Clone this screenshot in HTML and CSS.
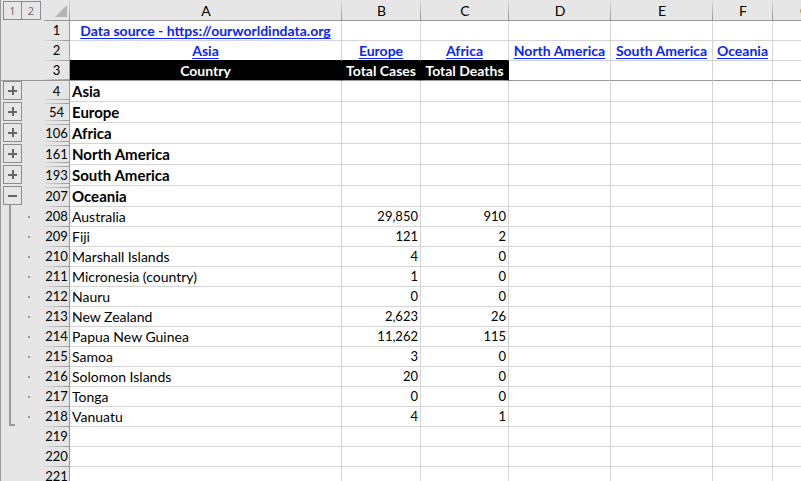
FILE: index.html
```html
<!DOCTYPE html>
<html lang="en">
<head>
    <meta charset="UTF-8">
    <meta name="viewport" content="width=device-width, initial-scale=1.0">
    <title>Total Cases and Deaths by Country</title>
    <link rel="stylesheet" href="styles.css">
</head>
<body>
    <div class="sheet">
        <table class="grid">
            <colgroup>
                <col class="col-outline">
                <col class="col-dots">
                <col class="col-rownum">
                <col class="col-a">
                <col class="col-b">
                <col class="col-c">
                <col class="col-d">
                <col class="col-e">
                <col class="col-f">
                <col class="col-g">
            </colgroup>
            <thead>
                <tr class="letters">
                    <td class="levels" colspan="2"><div class="level-buttons"><button type="button">1</button><button type="button">2</button></div></td>
                    <td class="corner"><svg width="12" height="12" viewBox="0 0 12 12"><path d="M12 0V12H0Z" fill="#b4b4b4"/></svg></td>
                    <th>A</th><th>B</th><th>C</th><th>D</th><th>E</th><th>F</th><th>G</th>
                </tr>
                <tr>
                    <td class="outline"></td><td class="outline"></td><th class="num">1</th>
                    <td class="link"><a href="https://ourworldindata.org">Data source - https://ourworldindata.org</a></td>
                    <td></td><td></td><td></td><td></td><td></td><td></td>
                </tr>
                <tr class="links">
                    <td class="outline"></td><td class="outline"></td><th class="num">2</th>
                    <td class="link"><a href="#asia">Asia</a></td>
                    <td class="link"><a href="#europe">Europe</a></td>
                    <td class="link"><a href="#africa">Africa</a></td>
                    <td class="link"><a href="#north-america">North America</a></td>
                    <td class="link"><a href="#south-america">South America</a></td>
                    <td class="link"><a href="#oceania">Oceania</a></td>
                    <td></td>
                </tr>
                <tr class="frozen">
                    <td class="outline"></td><td class="outline"></td><th class="num">3</th>
                    <th class="title">Country</th><th class="title">Total Cases</th><th class="title">Total Deaths</th>
                    <td></td><td></td><td></td><td></td>
                </tr>
            </thead>
            <tbody>
                <tr class="group first" id="asia">
                    <td class="outline"><button type="button" class="toggle" aria-label="Expand Asia"></button></td><td class="outline"></td><th class="num">4</th>
                    <td>Asia</td><td></td><td></td><td></td><td></td><td></td><td></td>
                </tr>
                <tr class="group" id="europe">
                    <td class="outline"><button type="button" class="toggle" aria-label="Expand Europe"></button></td><td class="outline"></td><th class="num">54</th>
                    <td>Europe</td><td></td><td></td><td></td><td></td><td></td><td></td>
                </tr>
                <tr class="group" id="africa">
                    <td class="outline"><button type="button" class="toggle" aria-label="Expand Africa"></button></td><td class="outline"></td><th class="num">106</th>
                    <td>Africa</td><td></td><td></td><td></td><td></td><td></td><td></td>
                </tr>
                <tr class="group" id="north-america">
                    <td class="outline"><button type="button" class="toggle" aria-label="Expand North America"></button></td><td class="outline"></td><th class="num">161</th>
                    <td>North America</td><td></td><td></td><td></td><td></td><td></td><td></td>
                </tr>
                <tr class="group" id="south-america">
                    <td class="outline"><button type="button" class="toggle" aria-label="Expand South America"></button></td><td class="outline"></td><th class="num">193</th>
                    <td>South America</td><td></td><td></td><td></td><td></td><td></td><td></td>
                </tr>
                <tr class="group open" id="oceania">
                    <td class="outline"><button type="button" class="toggle" aria-label="Collapse Oceania"></button><div class="line stub"></div></td><td class="outline"></td><th class="num">207</th>
                    <td>Oceania</td><td></td><td></td><td></td><td></td><td></td><td></td>
                </tr>
                <tr>
                    <td class="outline"><div class="line"></div></td><td class="outline dot"></td><th class="num">208</th>
                    <td>Australia</td><td class="value">29,850</td><td class="value">910</td><td></td><td></td><td></td><td></td>
                </tr>
                <tr>
                    <td class="outline"><div class="line"></div></td><td class="outline dot"></td><th class="num">209</th>
                    <td>Fiji</td><td class="value">121</td><td class="value">2</td><td></td><td></td><td></td><td></td>
                </tr>
                <tr>
                    <td class="outline"><div class="line"></div></td><td class="outline dot"></td><th class="num">210</th>
                    <td>Marshall Islands</td><td class="value">4</td><td class="value">0</td><td></td><td></td><td></td><td></td>
                </tr>
                <tr>
                    <td class="outline"><div class="line"></div></td><td class="outline dot"></td><th class="num">211</th>
                    <td>Micronesia (country)</td><td class="value">1</td><td class="value">0</td><td></td><td></td><td></td><td></td>
                </tr>
                <tr>
                    <td class="outline"><div class="line"></div></td><td class="outline dot"></td><th class="num">212</th>
                    <td>Nauru</td><td class="value">0</td><td class="value">0</td><td></td><td></td><td></td><td></td>
                </tr>
                <tr>
                    <td class="outline"><div class="line"></div></td><td class="outline dot"></td><th class="num">213</th>
                    <td>New Zealand</td><td class="value">2,623</td><td class="value">26</td><td></td><td></td><td></td><td></td>
                </tr>
                <tr>
                    <td class="outline"><div class="line"></div></td><td class="outline dot"></td><th class="num">214</th>
                    <td>Papua New Guinea</td><td class="value">11,262</td><td class="value">115</td><td></td><td></td><td></td><td></td>
                </tr>
                <tr>
                    <td class="outline"><div class="line"></div></td><td class="outline dot"></td><th class="num">215</th>
                    <td>Samoa</td><td class="value">3</td><td class="value">0</td><td></td><td></td><td></td><td></td>
                </tr>
                <tr>
                    <td class="outline"><div class="line"></div></td><td class="outline dot"></td><th class="num">216</th>
                    <td>Solomon Islands</td><td class="value">20</td><td class="value">0</td><td></td><td></td><td></td><td></td>
                </tr>
                <tr>
                    <td class="outline"><div class="line"></div></td><td class="outline dot"></td><th class="num">217</th>
                    <td>Tonga</td><td class="value">0</td><td class="value">0</td><td></td><td></td><td></td><td></td>
                </tr>
                <tr>
                    <td class="outline"><div class="line end"></div></td><td class="outline dot"></td><th class="num">218</th>
                    <td>Vanuatu</td><td class="value">4</td><td class="value">1</td><td></td><td></td><td></td><td></td>
                </tr>
                <tr>
                    <td class="outline"></td><td class="outline"></td><th class="num">219</th>
                    <td></td><td></td><td></td><td></td><td></td><td></td><td></td>
                </tr>
                <tr>
                    <td class="outline"></td><td class="outline"></td><th class="num">220</th>
                    <td></td><td></td><td></td><td></td><td></td><td></td><td></td>
                </tr>
                <tr>
                    <td class="outline"></td><td class="outline"></td><th class="num">221</th>
                    <td></td><td></td><td></td><td></td><td></td><td></td><td></td>
                </tr>
            </tbody>
        </table>
    </div>
</body>
</html>
```

FILE: styles.css
```css
* {
    box-sizing: border-box;
}
body {
    margin: 0;
    background: #fff;
    color: #000;
    font-family: Lato, "Liberation Sans", sans-serif;
    font-size: 14px;
}
.sheet {
    height: 100vh;
    overflow: hidden;
}
.grid {
    width: 837px;
    min-width: 100%;
    table-layout: fixed;
    border-collapse: separate;
    border-spacing: 0;
}
.col-outline, .col-dots { width: 22px; }
.col-rownum { width: 26px; }
.col-a { width: 272px; }
.col-b { width: 79px; }
.col-c { width: 88px; }
.col-d, .col-e { width: 102px; }
.col-f { width: 60px; }
.col-g { width: 64px; }

.grid th,
.grid td {
    height: 20px;
    padding: 0 2px;
    border-right: 1px solid #d4d4d4;
    border-bottom: 1px solid #d4d4d4;
    line-height: 19px;
    white-space: nowrap;
    font-weight: normal;
    text-align: left;
    vertical-align: top;
}
.grid .value {
    font-size: 13px;
    text-align: right;
}

/* column letters */
.grid .letters th,
.grid .corner {
    height: 21px;
    padding-top: 2px;
    line-height: 18px;
    text-align: center;
    background: linear-gradient(#d8d8d8, #999) right / 1px 100% no-repeat #e6e6e6;
    border-right: 0;
    border-bottom-color: #999;
}
.grid .corner {
    padding: 5px 3px 0 0;
}
.corner svg {
    display: block;
    margin-left: auto;
}
.grid .levels {
    height: 21px;
    padding: 1px 0 0 2px;
    background: #e6e6e6;
    border: 0;
    border-left: 1px solid #999;
}
.level-buttons {
    display: flex;
}
.level-buttons button {
    width: 19px;
    height: 19px;
    padding: 0;
    border: 1px solid #8a8d91;
    background: #e6e6e6;
    color: #666;
    font: 11px "Open Sans", sans-serif;
}
.level-buttons button + button {
    border-left: 0;
}

/* row numbers */
.grid .num {
    padding: 0;
    font-size: 13px;
    text-align: center;
    background: linear-gradient(90deg, #dcdcdc, #999) bottom / 100% 1px no-repeat #e6e6e6;
    border-right-color: #999;
    border-bottom: 0;
}
.grid .group .num {
    background:
        linear-gradient(90deg, #dcdcdc, #999) 0 1px / 100% 1px no-repeat,
        linear-gradient(90deg, #dcdcdc, #999) 0 18px / 100% 1px no-repeat,
        #e6e6e6;
}
.grid .first .num {
    background: linear-gradient(90deg, #dcdcdc, #999) 0 18px / 100% 1px no-repeat #e6e6e6;
}
.grid .open .num {
    background:
        linear-gradient(90deg, #dcdcdc, #999) 0 1px / 100% 1px no-repeat,
        linear-gradient(90deg, #dcdcdc, #999) bottom / 100% 1px no-repeat,
        #e6e6e6;
}

/* heading cells */
.grid .link {
    text-align: center;
}
.link a {
    color: #0b24fb;
    font-weight: bold;
    text-decoration: underline;
    text-decoration-thickness: 1px;
    text-decoration-skip-ink: none;
    text-underline-offset: 2px;
}
.grid .title {
    padding: 0;
    background: #000;
    border-right-color: #000;
    color: #fff;
    font-weight: bold;
    text-align: center;
}
.grid .links td:nth-child(n+4):nth-child(-n+6) {
    border-bottom-color: #000;
}
.grid .frozen th,
.grid .frozen td {
    border-bottom: 1px solid #999;
}

/* grouped rows */
.grid .group th,
.grid .group td {
    height: 21px;
    line-height: 20px;
}
.grid .group td {
    font-size: 15px;
    font-weight: bold;
}
.grid .outline {
    padding: 0;
    background: #e6e6e6;
    border-right: 0;
    border-bottom: 0;
}
.grid .outline:first-child {
    padding-left: 2px;
    border-left: 1px solid #999;
}
.toggle {
    display: block;
    width: 19px;
    height: 19px;
    padding: 0;
    border: 1px solid #8a8d91;
    background:
        linear-gradient(#666, #666) 4px 8px / 9px 2px no-repeat,
        linear-gradient(#666, #666) 8px 4px / 2px 9px no-repeat,
        #e6e6e6;
}
.open .toggle {
    background: linear-gradient(#666, #666) 4px 8px / 9px 2px no-repeat #e6e6e6;
}
.line {
    width: 6px;
    height: 20px;
    margin-left: 6px;
    border-left: 2px solid #999;
}
.line.stub {
    height: 2px;
}
.line.end {
    height: 19px;
    border-bottom: 2px solid #999;
}
.grid .dot {
    background: radial-gradient(#999, #999) 6px 9px / 2px 2px no-repeat #e6e6e6;
}
```
